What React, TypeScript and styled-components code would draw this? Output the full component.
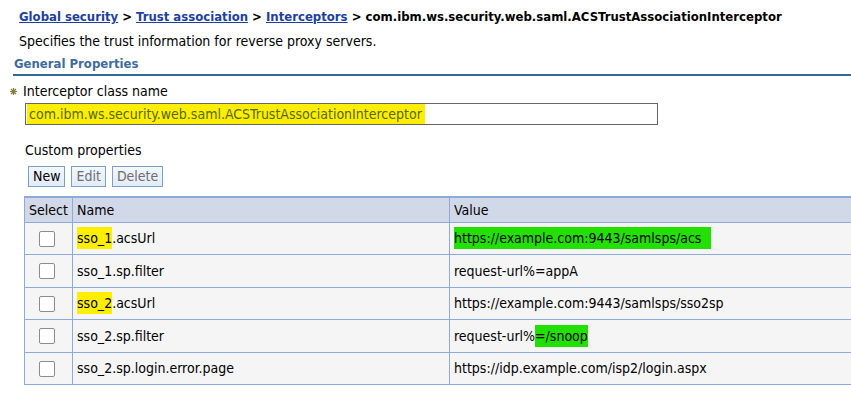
import React from "react";
import styled, { createGlobalStyle } from "styled-components";

const Global = createGlobalStyle`
  html, body { margin: 0; padding: 0; background: #fff; overflow: hidden; }
  body { font-family: "DejaVu Sans Condensed", "DejaVu Sans", Tahoma, sans-serif; font-size: 14px; color: #000; }
`;

const Page = styled.div`
  width: 851px;
  height: 401px;
  overflow: hidden;
  padding-top: 9px;
  box-sizing: border-box;
`;

const Breadcrumb = styled.div`
  margin-left: 19px;
  font-weight: bold;
  font-size: 13px;
  line-height: 16px;
  white-space: nowrap;
`;

const Crumb = styled.a`
  color: #1d3f9f;
  text-decoration: underline;
`;

const Sep = styled.span`
  color: #000;
`;

const Description = styled.div`
  margin: 8px 0 0 19px;
  line-height: 16px;
`;

const SectionTitle = styled.div`
  margin: 7px 0 0 13px;
  padding: 0 0 2px 1px;
  font-weight: bold;
  font-size: 13px;
  color: #3f6c9c;
  line-height: 16px;
  border-bottom: 2px solid #336699;
`;

const FieldLabel = styled.div`
  display: flex;
  align-items: center;
  gap: 6px;
  margin: 7px 0 0 10px;
  line-height: 16px;
`;

const RequiredMark = styled.span`
  width: 7px;
  height: 7px;
  display: inline-flex;
`;

const TextInput = styled.div`
  margin: 4px 0 0 25px;
  width: 633px;
  height: 22px;
  box-sizing: border-box;
  border: 1px solid #666;
  padding: 0 0 0 1px;
  display: flex;
  align-items: stretch;
`;

const InputHighlight = styled.span`
  background: #ffee00;
  color: #56690a;
  padding: 0 3px 0 2px;
  display: inline-flex;
  align-items: center;
  white-space: nowrap;
`;

const SubLabel = styled.div`
  margin: 17px 0 0 25px;
  line-height: 16px;
`;

const ButtonBar = styled.div`
  display: flex;
  gap: 6px;
  margin: 8px 0 0 28px;
`;

const Button = styled.button<{ $disabled?: boolean }>`
  font-family: inherit;
  font-size: 14px;
  font-weight: normal;
  height: 21px;
  padding: 0 4px;
  border: 1px solid #7f9ec4;
  background: linear-gradient(#f3f7fd, #e2ebf8);
  color: ${(p) => (p.$disabled ? "#6d6d6d" : "#000")};
  border-radius: 0;
  line-height: 19px;
  cursor: default;
`;

const Table = styled.table`
  margin: 9px 0 0 24px;
  width: 860px;
  border-collapse: collapse;
  border-top: 2px solid #8eaadb;
  border-left: 1px solid #8eaadb;
`;

const HeadCell = styled.th<{ $w?: number }>`
  background: #d1d9e8;
  font-weight: normal;
  text-align: left;
  height: 25px;
  padding: 0 4px;
  border-right: 1px solid #8eaadb;
  border-bottom: 1px solid #8eaadb;
  width: ${(p) => (p.$w ? `${p.$w}px` : "auto")};
  box-sizing: border-box;
`;

const Cell = styled.td<{ $center?: boolean }>`
  background: #f5f5f5;
  height: 32.5px;
  padding: ${(p) => (p.$center ? "0 4px 0 0" : "0 4px")};
  border-right: 1px solid #8eaadb;
  border-bottom: 1px solid #8eaadb;
  text-align: ${(p) => (p.$center ? "center" : "left")};
  vertical-align: middle;
  white-space: nowrap;
  box-sizing: border-box;
`;

const Check = styled.span`
  display: inline-block;
  width: 14px;
  height: 14px;
  border: 1.5px solid #8c8c8c;
  border-radius: 2px;
  background: #fff;
  vertical-align: middle;
`;

const Mark = styled.span<{ $color: "yellow" | "green"; $padRight?: number }>`
  background: ${(p) => (p.$color === "yellow" ? "#ffee00" : "#22e000")};
  padding: 3px ${(p) => p.$padRight ?? 0}px 3px 0;
`;

type Row = { name: React.ReactNode; value: React.ReactNode };

const rows: Row[] = [
  {
    name: (
      <>
        <Mark $color="yellow">sso_1</Mark>.acsUrl
      </>
    ),
    value: (
      <Mark $color="green" $padRight={10}>
        https://example.com:9443/samlsps/acs
      </Mark>
    ),
  },
  { name: "sso_1.sp.filter", value: "request-url%=appA" },
  {
    name: (
      <>
        <Mark $color="yellow">sso_2</Mark>.acsUrl
      </>
    ),
    value: "https://example.com:9443/samlsps/sso2sp",
  },
  {
    name: "sso_2.sp.filter",
    value: (
      <>
        request-url%<Mark $color="green">=/snoop</Mark>
      </>
    ),
  },
  { name: "sso_2.sp.login.error.page", value: "https://idp.example.com/isp2/login.aspx" },
];

export default function App() {
  return (
    <Page>
      <Global />
      <Breadcrumb>
        <Crumb>Global security</Crumb> <Sep>&gt;</Sep> <Crumb>Trust association</Crumb>{" "}
        <Sep>&gt;</Sep> <Crumb>Interceptors</Crumb> <Sep>&gt;</Sep>{" "}
        com.ibm.ws.security.web.saml.ACSTrustAssociationInterceptor
      </Breadcrumb>
      <Description>Specifies the trust information for reverse proxy servers.</Description>
      <SectionTitle>General Properties</SectionTitle>
      <FieldLabel>
        <RequiredMark>
          <svg width="7" height="7" viewBox="0 0 7 7">
            <path d="M3.5 0V7M0 3.5H7M1 1L6 6M6 1L1 6" stroke="#8a7a3a" strokeWidth="1.2" />
          </svg>
        </RequiredMark>
        Interceptor class name
      </FieldLabel>
      <TextInput>
        <InputHighlight>com.ibm.ws.security.web.saml.ACSTrustAssociationInterceptor</InputHighlight>
      </TextInput>
      <SubLabel>Custom properties</SubLabel>
      <ButtonBar>
        <Button>New</Button>
        <Button $disabled>Edit</Button>
        <Button $disabled>Delete</Button>
      </ButtonBar>
      <Table>
        <thead>
          <tr>
            <HeadCell $w={48}>Select</HeadCell>
            <HeadCell $w={377}>Name</HeadCell>
            <HeadCell>Value</HeadCell>
          </tr>
        </thead>
        <tbody>
          {rows.map((r, i) => (
            <tr key={i}>
              <Cell $center>
                <Check />
              </Cell>
              <Cell>{r.name}</Cell>
              <Cell>{r.value}</Cell>
            </tr>
          ))}
        </tbody>
      </Table>
    </Page>
  );
}
